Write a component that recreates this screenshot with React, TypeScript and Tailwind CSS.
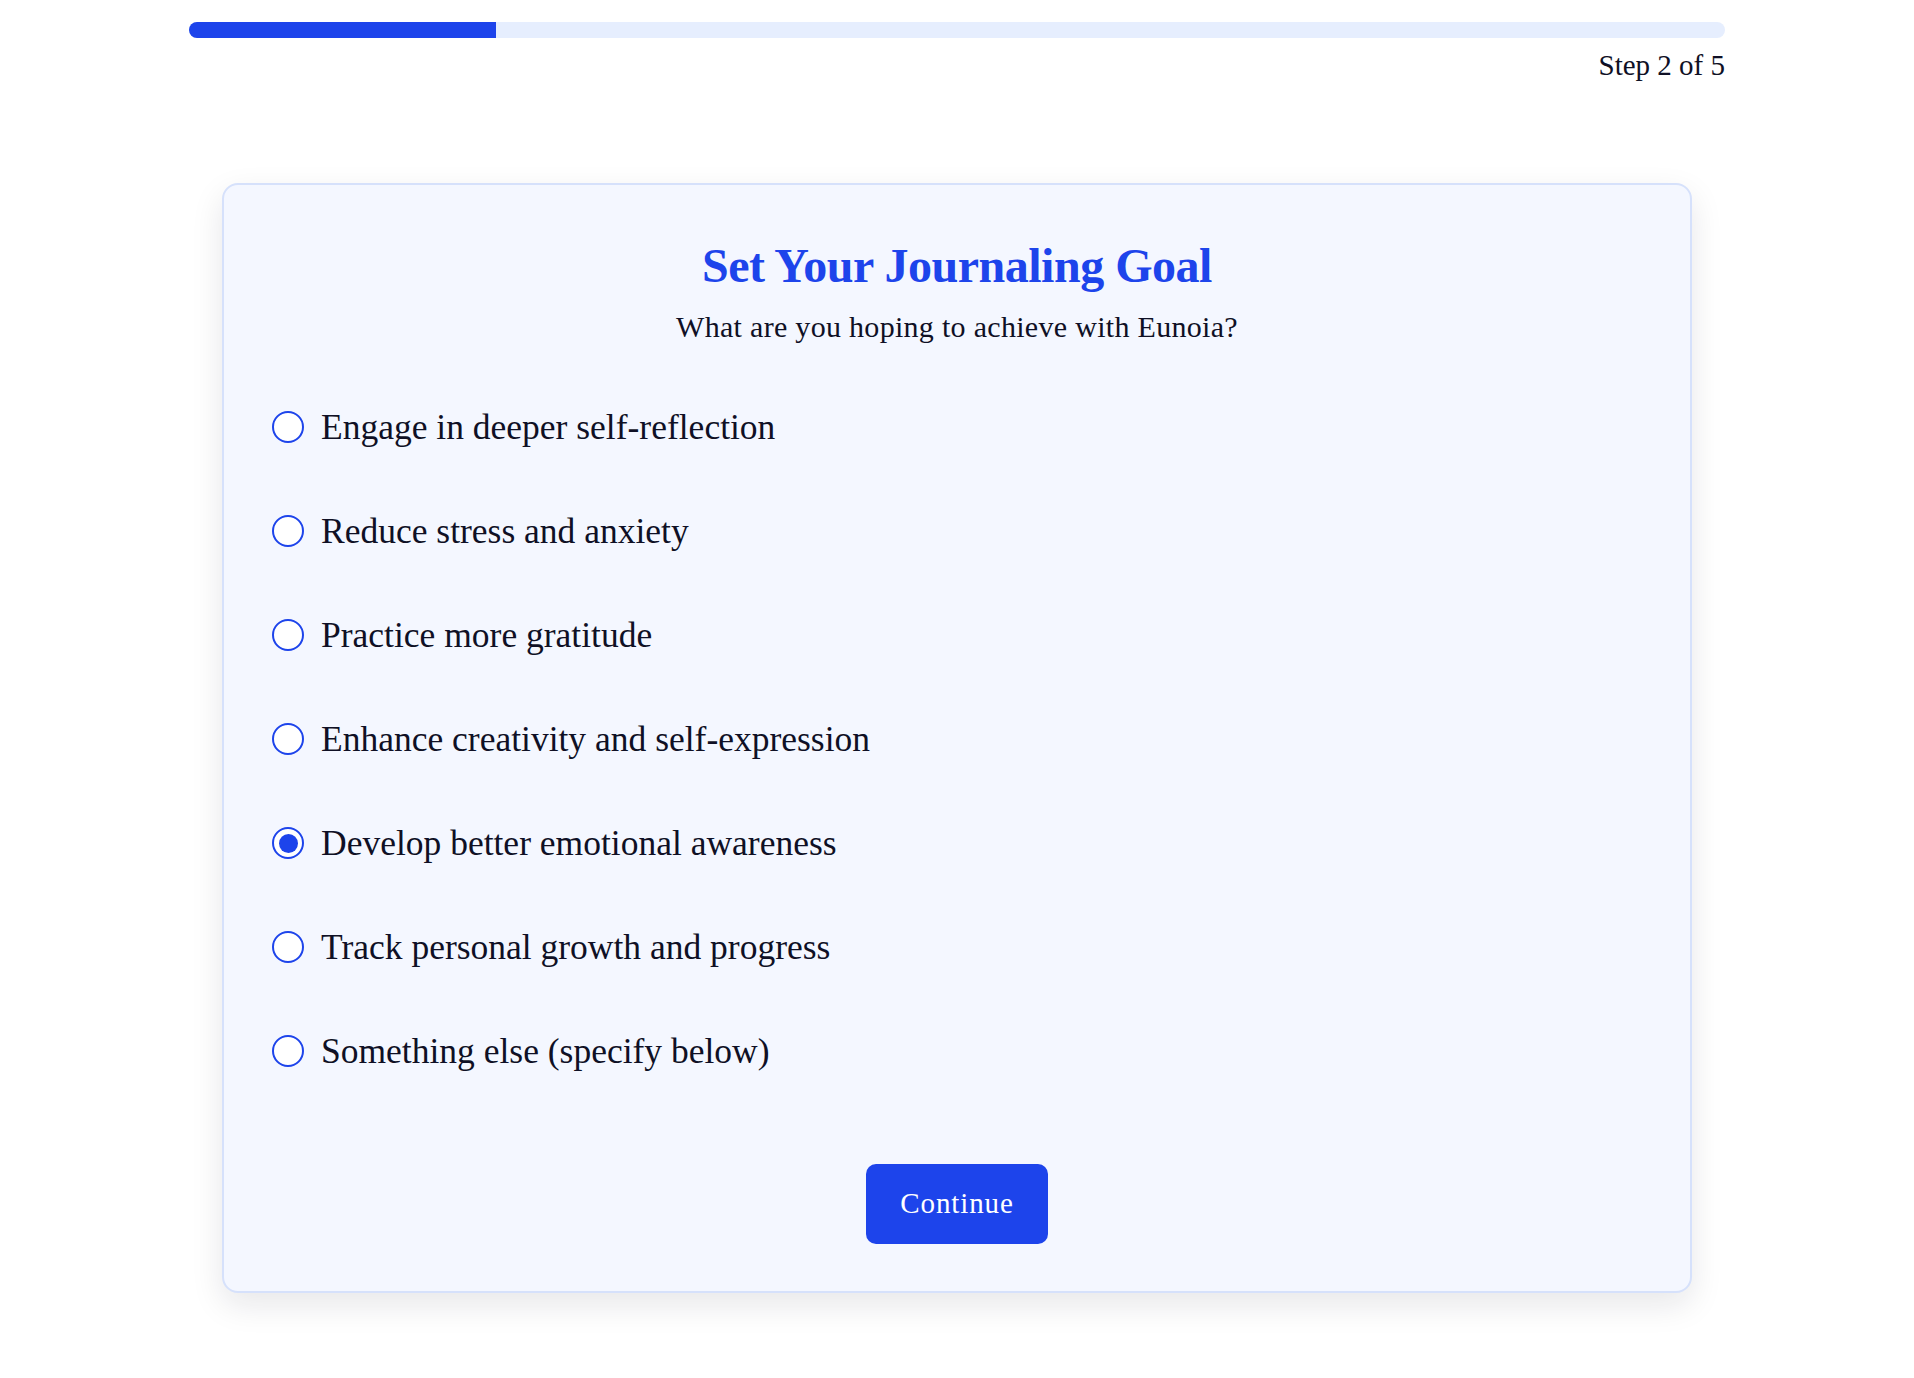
const goals = [
  "Engage in deeper self-reflection",
  "Reduce stress and anxiety",
  "Practice more gratitude",
  "Enhance creativity and self-expression",
  "Develop better emotional awareness",
  "Track personal growth and progress",
  "Something else (specify below)"
];

const selected = 4;

function Radio({ checked }: { checked: boolean }) {
  return (
    <span className="flex h-[32px] w-[32px] shrink-0 items-center justify-center rounded-full border-[2.5px] border-[#1d44eb] bg-white">
      {checked ? <span className="h-[19px] w-[19px] rounded-full bg-[#1d44eb]" /> : null}
    </span>
  );
}

export default function App() {
  return (
    <div className="min-h-screen bg-white pb-20 text-[#0f1025] [font-family:'Liberation_Serif',serif]">
      <div className="mx-auto max-w-[1536px] pt-[22px]">
        <div className="h-4 overflow-hidden rounded-full bg-[#e6eefe]">
          <div className="h-full w-1/5 bg-[#1d44eb]" />
        </div>
        <p className="mt-[10px] text-right text-[29px] leading-[35px]">Step 2 of 5</p>

        <div className="mx-[33px] mt-[100px] rounded-2xl border-2 border-[#d6e1fb] bg-[#f4f7ff] px-[48px] pb-[47px] pt-[52px] shadow-[0_12px_32px_rgba(15,23,42,0.10)]">
          <h1 className="text-center text-[48px] font-bold leading-[58px] tracking-[-0.01em] text-[#1d44eb]">
            Set Your Journaling Goal
          </h1>
          <p className="mt-[14px] text-center text-[30px] leading-[36px] tracking-[0.01em]">
            What are you hoping to achieve with Eunoia?
          </p>

          <div className="mt-[61px] flex flex-col gap-[62px]">
            {goals.map((goal, index) => (
              <label key={goal} className="flex h-[42px] cursor-pointer items-center gap-[17px]">
                <Radio checked={index === selected} />
                <span className="text-[35.5px] leading-[42px]">{goal}</span>
              </label>
            ))}
          </div>

          <div className="mt-[92px] flex justify-center">
            <button className="h-[80px] w-[182px] rounded-[10px] bg-[#1d44eb] text-[29px] tracking-[0.03em] text-white">
              Continue
            </button>
          </div>
        </div>
      </div>
    </div>
  );
}
